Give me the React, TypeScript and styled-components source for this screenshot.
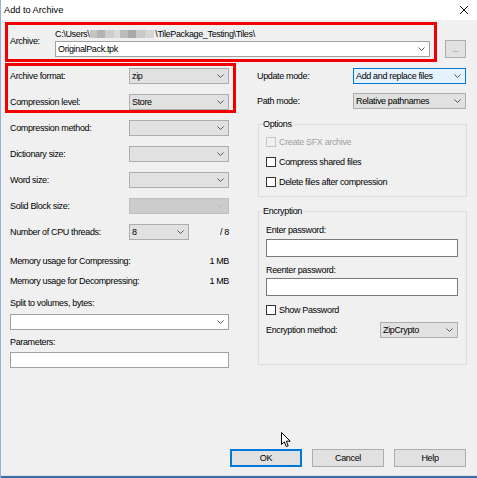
import React from 'react';
import styled, { createGlobalStyle, css } from 'styled-components';

const GlobalStyle = createGlobalStyle`
  html, body { margin: 0; padding: 0; background: #ffffff; }
  body {
    font-family: "Liberation Sans", Arial, sans-serif;
    font-size: 9px;
    color: #000;
  }
  * { box-sizing: border-box; }
`;

const Window = styled.div`
  position: relative;
  width: 477px;
  height: 478px;
  display: flex;
  flex-direction: column;
  background: #f0f0f0;
  border-left: 1px solid #8db2de;
  overflow: hidden;
  letter-spacing: -0.35px;
`;

const TitleBar = styled.div`
  height: 20px;
  flex: none;
  display: flex;
  align-items: center;
  justify-content: space-between;
  padding: 0 8px 0 3px;
  background: #ffffff;
  font-size: 9.2px;
  letter-spacing: 0;
`;

const Body = styled.div`
  flex: 1;
  display: flex;
  flex-direction: column;
  padding: 8px 10px 8px 9px;
`;

const BottomEdge = styled.div`
  height: 3px;
  flex: none;
  border-top: 1px solid #dfe3e8;
  background: #3a6ea8;
`;

const ArchiveGrid = styled.div`
  display: grid;
  grid-template-columns: 45px 375px auto;
  grid-template-rows: 12px 16px;
  row-gap: 1px;
`;

const ArchiveLabel = styled.div`
  grid-column: 1;
  grid-row: 1 / span 2;
  align-self: center;
  line-height: 12px;
  margin-bottom: 3px;
`;

const PathLine = styled.div`
  grid-column: 2;
  grid-row: 1;
  line-height: 12px;
  white-space: nowrap;
  display: flex;
  align-items: center;
`;

const Blur = styled.span`
  display: inline-block;
  width: 64px;
  height: 8px;
  margin: 0 1px;
  background: linear-gradient(
    90deg,
    #c4c4c4 0 7px,
    #b3b3b3 7px 15px,
    #cdcdcd 15px 24px,
    #dadada 24px 30px,
    #bdbdbd 30px 38px,
    #a9a9a9 38px 46px,
    #c9c9c9 46px 55px,
    #d6d6d6 55px 64px
  );
`;

type Tone = 'normal' | 'focus' | 'disabled' | 'white';

const tones: Record<Tone, ReturnType<typeof css>> = {
  normal: css`
    background: #e1e1e1;
    border-color: #adadad;
  `,
  focus: css`
    background: #e5f1fb;
    border-color: #0078d7;
  `,
  disabled: css`
    background: #cccccc;
    border-color: #bfbfbf;
  `,
  white: css`
    background: #ffffff;
    border-color: #a0a0a0;
  `,
};

const SelectBox = styled.div<{ $w?: number; $tone: Tone }>`
  height: 16px;
  width: ${(p) => (p.$w ? `${p.$w}px` : '100%')};
  display: flex;
  align-items: center;
  justify-content: space-between;
  padding: 0 4px 0 2px;
  border: 1px solid;
  white-space: nowrap;
  ${(p) => tones[p.$tone]}
`;

const ComboCell = styled.div`
  grid-column: 2;
  grid-row: 2;
`;

const BrowseButton = styled.div`
  grid-column: 3;
  grid-row: 2;
  align-self: center;
  margin-left: 15px;
  width: 21px;
  height: 18px;
  background: #e1e1e1;
  border: 1px solid #adadad;
  color: #555;
  font-size: 8px;
  letter-spacing: 0;
  display: flex;
  align-items: flex-end;
  justify-content: center;
  padding-bottom: 3px;
  line-height: 8px;
`;

const Columns = styled.div`
  display: flex;
  gap: 28px;
  margin-top: 11px;
`;

const Column = styled.div<{ $w: number }>`
  width: ${(p) => p.$w}px;
  display: flex;
  flex-direction: column;
`;

const Stack = styled.div<{ $gap: number }>`
  display: flex;
  flex-direction: column;
  gap: ${(p) => p.$gap}px;
`;

const FieldRow = styled.div<{ $labelW: number }>`
  display: grid;
  grid-template-columns: ${(p) => p.$labelW}px auto 1fr;
  align-items: center;
  height: 16px;
`;

const Text = styled.span<{ $muted?: boolean }>`
  line-height: 12px;
  white-space: nowrap;
  color: ${(p) => (p.$muted ? '#a0a0a0' : '#000')};
`;

const RightText = styled(Text)`
  justify-self: end;
`;

const InfoRow = styled.div<{ $mt: number }>`
  display: flex;
  justify-content: space-between;
  line-height: 12px;
  margin-top: ${(p) => p.$mt}px;
  white-space: nowrap;
`;

const BlockLabel = styled.div<{ $mt: number }>`
  line-height: 12px;
  margin-top: ${(p) => p.$mt}px;
  white-space: nowrap;
`;

const Spaced = styled.div<{ $mt: number }>`
  margin-top: ${(p) => p.$mt}px;
`;

const TextInput = styled.div<{ $h: number; $border: string }>`
  height: ${(p) => p.$h}px;
  background: #ffffff;
  border: 1px solid ${(p) => p.$border};
`;

const Group = styled.fieldset<{ $mt: number; $pad: string }>`
  margin: ${(p) => p.$mt}px 0 0 1px;
  padding: ${(p) => p.$pad};
  border: 1px solid #dcdcdc;
  min-width: 0;
`;

const Legend = styled.legend`
  padding: 0 1px;
  margin-left: -4px;
  line-height: 12px;
`;

const GroupBody = styled.div`
  display: flex;
  flex-direction: column;
`;

const CheckRow = styled.div<{ $mt?: number }>`
  display: flex;
  align-items: center;
  gap: 3px;
  height: 12px;
  margin-top: ${(p) => p.$mt ?? 0}px;
`;

const Box = styled.span<{ $disabled?: boolean }>`
  width: 10px;
  height: 10px;
  flex: none;
  background: ${(p) => (p.$disabled ? '#f0f0f0' : '#ffffff')};
  border: 1px solid ${(p) => (p.$disabled ? '#c6c6c6' : '#333333')};
`;

const SplitRow = styled.div<{ $mt: number }>`
  display: flex;
  align-items: center;
  justify-content: space-between;
  height: 16px;
  margin-top: ${(p) => p.$mt}px;
`;

const ButtonRow = styled.div`
  margin-top: auto;
  display: flex;
  justify-content: flex-end;
  gap: 10px;
  padding-right: 1px;
`;

const DialogButton = styled.div<{ $primary?: boolean }>`
  width: 72px;
  height: 18px;
  display: flex;
  align-items: center;
  justify-content: center;
  background: #e1e1e1;
  border: 1px solid ${(p) => (p.$primary ? '#0078d7' : '#adadad')};
  box-shadow: ${(p) => (p.$primary ? 'inset 0 0 0 1px #0078d7' : 'none')};
`;

const Highlight = styled.div<{ $l: number; $t: number; $w: number; $h: number }>`
  position: absolute;
  left: ${(p) => p.$l}px;
  top: ${(p) => p.$t}px;
  width: ${(p) => p.$w}px;
  height: ${(p) => p.$h}px;
  border: 3px solid #f00000;
  pointer-events: none;
`;

const Cursor = styled.svg`
  position: absolute;
  left: 280px;
  top: 432px;
`;

const Chevron: React.FC<{ color?: string }> = ({ color = '#333' }) => (
  <svg width="7" height="4" viewBox="0 0 7 4" style={{ flex: 'none' }}>
    <polyline points="0.5,0.5 3.5,3.5 6.5,0.5" fill="none" stroke={color} strokeWidth="0.9" />
  </svg>
);

const Select: React.FC<{ w?: number; tone?: Tone; value?: string }> = ({ w, tone = 'normal', value }) => (
  <SelectBox $w={w} $tone={tone}>
    <span>{value ?? ''}</span>
    <Chevron color={tone === 'disabled' ? '#b5b5b5' : '#444'} />
  </SelectBox>
);

const CloseIcon = () => (
  <svg width="10" height="10" viewBox="0 0 10 10">
    <path d="M1 1 L9 9 M9 1 L1 9" stroke="#111" strokeWidth="1" />
  </svg>
);

const leftRows: { label: string; value?: string; tone?: Tone }[] = [
  { label: 'Archive format:', value: 'zip' },
  { label: 'Compression level:', value: 'Store' },
  { label: 'Compression method:' },
  { label: 'Dictionary size:' },
  { label: 'Word size:' },
  { label: 'Solid Block size:', tone: 'disabled' },
];

export default function App() {
  return (
    <>
      <GlobalStyle />
      <Window>
        <TitleBar>
          <span>Add to Archive</span>
          <CloseIcon />
        </TitleBar>
        <Body>
          <ArchiveGrid>
            <ArchiveLabel>Archive:</ArchiveLabel>
            <PathLine>
              <span>C:\Users\</span>
              <Blur />
              <span>\TilePackage_Testing\Tiles\</span>
            </PathLine>
            <ComboCell>
              <Select tone="white" value="OriginalPack.tpk" />
            </ComboCell>
            <BrowseButton>...</BrowseButton>
          </ArchiveGrid>

          <Columns>
            <Column $w={219}>
              <Stack $gap={10}>
                {leftRows.map((r) => (
                  <FieldRow key={r.label} $labelW={119}>
                    <Text>{r.label}</Text>
                    <Select w={100} tone={r.tone} value={r.value} />
                  </FieldRow>
                ))}
                <FieldRow $labelW={119}>
                  <Text>Number of CPU threads:</Text>
                  <Select w={60} value="8" />
                  <RightText>/ 8</RightText>
                </FieldRow>
              </Stack>
              <InfoRow $mt={15}>
                <span>Memory usage for Compressing:</span>
                <span>1 MB</span>
              </InfoRow>
              <InfoRow $mt={8}>
                <span>Memory usage for Decompressing:</span>
                <span>1 MB</span>
              </InfoRow>
              <BlockLabel $mt={10}>Split to volumes, bytes:</BlockLabel>
              <Spaced $mt={5}>
                <Select tone="white" />
              </Spaced>
              <BlockLabel $mt={6}>Parameters:</BlockLabel>
              <Spaced $mt={4}>
                <TextInput $h={16} $border="#a0a0a0" />
              </Spaced>
            </Column>

            <Column $w={210}>
              <Stack $gap={9}>
                <FieldRow $labelW={96}>
                  <Text>Update mode:</Text>
                  <Select w={113} tone="focus" value="Add and replace files" />
                </FieldRow>
                <FieldRow $labelW={96}>
                  <Text>Path mode:</Text>
                  <Select w={113} value="Relative pathnames" />
                </FieldRow>
              </Stack>

              <Group $mt={9} $pad="6px 8px 8px 7px">
                <Legend>Options</Legend>
                <GroupBody>
                  <CheckRow>
                    <Box $disabled />
                    <Text $muted>Create SFX archive</Text>
                  </CheckRow>
                  <CheckRow $mt={8}>
                    <Box />
                    <Text>Compress shared files</Text>
                  </CheckRow>
                  <CheckRow $mt={8}>
                    <Box />
                    <Text>Delete files after compression</Text>
                  </CheckRow>
                </GroupBody>
              </Group>

              <Group $mt={8} $pad="7px 8px 26px 7px">
                <Legend>Encryption</Legend>
                <GroupBody>
                  <BlockLabel $mt={0}>Enter password:</BlockLabel>
                  <Spaced $mt={3}>
                    <TextInput $h={18} $border="#7a7a7a" />
                  </Spaced>
                  <BlockLabel $mt={7}>Reenter password:</BlockLabel>
                  <Spaced $mt={2}>
                    <TextInput $h={18} $border="#7a7a7a" />
                  </Spaced>
                  <CheckRow $mt={8}>
                    <Box />
                    <Text>Show Password</Text>
                  </CheckRow>
                  <SplitRow $mt={6}>
                    <Text>Encryption method:</Text>
                    <Select w={78} value="ZipCrypto" />
                  </SplitRow>
                </GroupBody>
              </Group>
            </Column>
          </Columns>

          <ButtonRow>
            <DialogButton $primary>OK</DialogButton>
            <DialogButton>Cancel</DialogButton>
            <DialogButton>Help</DialogButton>
          </ButtonRow>
        </Body>
        <BottomEdge />

        <Highlight $l={4} $t={22} $w={432} $h={40} />
        <Highlight $l={4} $t={63} $w={231} $h={50} />
        <Cursor width="11" height="16" viewBox="0 0 11 16">
          <path d="M0.5 0.5 L0.5 12.5 L3.3 9.8 L5.3 14.6 L7.2 13.8 L5.3 9.2 L9.2 9.2 Z" fill="#fff" stroke="#000" strokeWidth="1" strokeLinejoin="round" />
        </Cursor>
      </Window>
    </>
  );
}
